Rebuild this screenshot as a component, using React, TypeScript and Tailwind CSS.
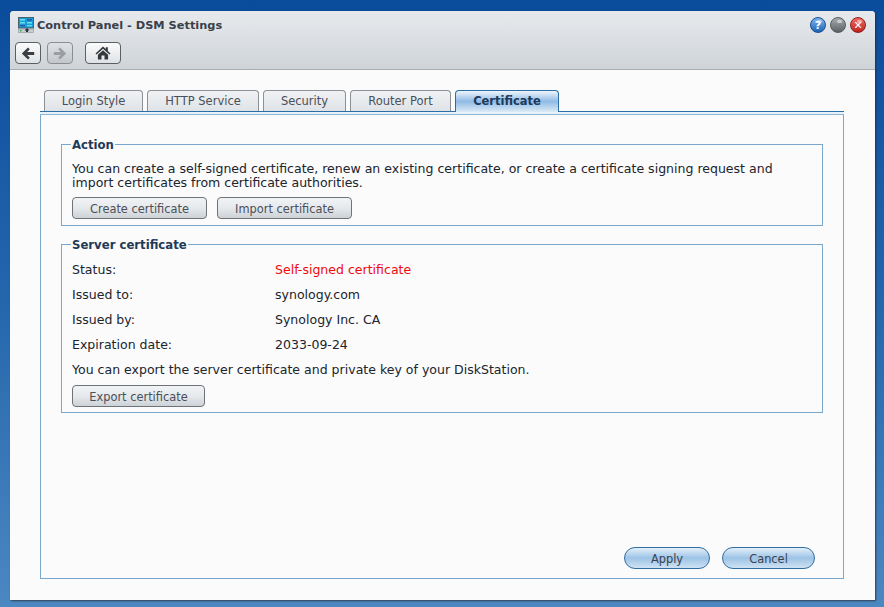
import React from "react";

const font = "font-['DejaVu_Sans',Verdana,sans-serif]";

const tabs = [
  { label: "Login Style", w: "w-[99px]" },
  { label: "HTTP Service", w: "w-[112px]" },
  { label: "Security", w: "w-[83px]" },
  { label: "Router Port", w: "w-[101px]" },
];

const details = [
  { k: "Status:", v: "Self-signed certificate", c: "text-[#f00a0a]" },
  { k: "Issued to:", v: "synology.com", c: "text-[#20242c]" },
  { k: "Issued by:", v: "Synology Inc. CA", c: "text-[#20242c]" },
  { k: "Expiration date:", v: "2033-09-24", c: "text-[#20242c]" },
];

const GrayButton = ({ label, w }: { label: string; w: string }) => (
  <button className={`${w} h-[22px] pt-[3px] rounded-[4px] border border-[#6e7378] bg-gradient-to-b from-[#f1f3f5] via-[#e6e9ec] to-[#cdd2d7] text-[11.4px] text-[#4a4f58] flex items-center justify-center`}>
    {label}
  </button>
);

const BlueButton = ({ label, w }: { label: string; w: string }) => (
  <button className={`${w} h-[22px] pt-[3px] rounded-full border border-[#2f6c9f] bg-gradient-to-b from-[#e4eff8] via-[#9cc3e6] to-[#cfe2f2] text-[11.4px] text-[#3b4250] flex items-center justify-center`}>
    {label}
  </button>
);

const NavButton = ({ children, w, off }: { children: React.ReactNode; w: string; off?: boolean }) => (
  <div className={`${w} h-[22px] rounded-[4px] border ${off ? "border-[#8a8f94] from-[#dfe2e5] to-[#c3c7cb]" : "border-[#5a5f64] from-[#fbfcfc] to-[#dfe2e5]"} bg-gradient-to-b flex items-center justify-center`}>
    {children}
  </div>
);

const Arrow = ({ color, flip }: { color: string; flip?: boolean }) => (
  <svg width="14" height="13" viewBox="0 0 14 13" className={flip ? "-scale-x-100" : ""}>
    <path d="M7 0.5 L0.8 6.5 L7 12.5 L8.8 10.7 L6.2 8.1 H13.2 V4.9 H6.2 L8.8 2.3 Z" fill={color} />
  </svg>
);

const Home = () => (
  <svg width="16" height="14" viewBox="0 0 16 14">
    <path d="M8 0.5 L0.5 7.4 L1.6 8.5 L8 2.8 L14.4 8.5 L15.5 7.4 L12.8 4.9 V1.2 H10.8 V3.1 Z" fill="#33383d" />
    <path d="M8 4.2 L2.9 8.7 V13.5 H6.5 V9.6 H9.5 V13.5 H13.1 V8.7 Z" fill="#33383d" />
  </svg>
);

const PanelIcon = () => (
  <svg width="16" height="16" viewBox="0 0 16 16">
    <rect x="0.5" y="0.5" width="15" height="10.5" fill="#1c9bd8" stroke="#47606e" />
    <rect x="2" y="2" width="5" height="1.6" fill="#60e0e8" />
    <rect x="2" y="5" width="5" height="1.6" fill="#60e0e8" />
    <rect x="2" y="8" width="5" height="1.4" fill="#1f5fa8" />
    <rect x="9" y="2" width="5" height="1.6" fill="#1f5fa8" />
    <rect x="9" y="5" width="5" height="1.6" fill="#60e0e8" />
    <rect x="9" y="8" width="5" height="1.4" fill="#60e0e8" />
    <rect x="0.5" y="12" width="15" height="3.5" fill="#c9ced2" stroke="#8b9298" strokeWidth="0.6" />
    <rect x="2" y="13" width="1.5" height="1.5" fill="#2fae4f" />
    <path d="M9 11 L6.5 13.5 H8 V15 H10 V13.5 H11.5 Z" fill="#2b3036" />
  </svg>
);

const Orb = ({ from, to, edge, children }: { from: string; to: string; edge: string; children?: React.ReactNode }) => (
  <div className={`relative w-[16px] h-[16px] rounded-full border ${edge} bg-gradient-to-b ${from} ${to} flex items-center justify-center text-white text-[11px] font-bold leading-none`}>
    <span className="absolute left-[6px] top-[2px] w-[5px] h-[3px] rounded-full bg-white/50" />
    <span className="relative">{children}</span>
  </div>
);

export default function App() {
  return (
    <div className={`w-[884px] h-[607px] overflow-hidden bg-gradient-to-b from-[#0a4c9c] via-[#2467ad] to-[#4b88c2] pl-[10px] pr-[9px] pt-[11px] ${font}`}>
      <div className="w-[865px] h-[589px] flex flex-col bg-[#fbfbfc] rounded-t-[4px] shadow-[1px_1px_2px_rgba(40,40,40,0.75)]">
        {/* title bar */}
        <div className="h-[59px] shrink-0 rounded-t-[4px] border-b border-[#a9adb1] bg-gradient-to-b from-[#e7eaed] to-[#cfd4d8] px-[5px] pt-[6px]">
          <div className="flex items-center h-[16px] pl-[3px] pr-[4px]">
            <PanelIcon />
            <span className="ml-[3px] text-[11.35px] font-bold text-[#39404a]">Control Panel - DSM Settings</span>
            <div className="ml-auto flex gap-[4px]">
              <Orb from="from-[#7fb6ea]" to="to-[#1c63b8]" edge="border-[#1b4f8f]">?</Orb>
              <Orb from="from-[#a8acaf]" to="to-[#5d6266]" edge="border-[#55595c]" />
              <Orb from="from-[#ee6a62]" to="to-[#c0201c]" edge="border-[#8f1f1c]">✕</Orb>
            </div>
          </div>
          <div className="flex mt-[9px]">
            <NavButton w="w-[26px]"><Arrow color="#3a3f44" /></NavButton>
            <div className="w-[6px]" />
            <NavButton w="w-[26px]" off><Arrow color="#9a9ea2" flip /></NavButton>
            <div className="w-[12px]" />
            <NavButton w="w-[36px]"><Home /></NavButton>
          </div>
        </div>

        {/* content */}
        <div className="flex-1 flex flex-col pl-[30px] pr-[31px] pt-[20px] pb-[21px]">
          <div className="flex items-start h-[21px] pl-[4px] gap-[4px]">
            {tabs.map((t) => (
              <div key={t.label} className={`${t.w} h-[21px] pt-[1px] rounded-t-[4px] border border-b-0 border-[#8d9195] bg-gradient-to-b from-[#f0f2f4] to-[#dfe3e7] text-[11.5px] text-[#4a4f5a] flex items-center justify-center`}>
                {t.label}
              </div>
            ))}
            <div className="relative z-10 w-[104px] h-[22px] rounded-t-[4px] border border-b-0 border-[#2b6ea6] bg-gradient-to-b from-[#eef5fb] via-[#8fbbe4] to-[#dceaf6] text-[11.5px] font-bold text-[#1d3a5c] flex items-center justify-center">
              Certificate
            </div>
          </div>

          <div className="flex-1 flex flex-col border border-t-0 border-[#7ba7cc]">
            <div className="h-[4px] shrink-0 -mx-px border-t border-t-[#2b6ea6] border-b border-b-[#8fb5d6] bg-[#e9f2f9]" />
            <div className="flex-1 flex flex-col px-[20px] pt-[21px]">
              <fieldset className="h-[90px] border border-[#7ba7cc] px-[10px]">
                <legend className="h-[16px] pt-[2px] px-[1px] -ml-[1px] text-[11.7px] font-bold text-[#1f3a58] leading-[14px]">Action</legend>
                <p className="mt-[10px] text-[12.54px] leading-[14px] text-[#20242c]">
                  You can create a self-signed certificate, renew an existing certificate, or create a certificate signing request and import certificates from certificate authorities.
                </p>
                <div className="flex gap-[10px] mt-[7px]">
                  <GrayButton label="Create certificate" w="w-[135px]" />
                  <GrayButton label="Import certificate" w="w-[135px]" />
                </div>
              </fieldset>

              <fieldset className="mt-[10px] h-[177px] border border-[#7ba7cc] px-[10px]">
                <legend className="h-[16px] pt-[2px] px-[1px] -ml-[1px] text-[11.7px] font-bold text-[#1f3a58] leading-[14px]">Server certificate</legend>
                <div className="mt-[11px] flex flex-col gap-[11px]">
                  {details.map((d) => (
                    <div key={d.k} className="flex h-[14px] items-center text-[12.54px]">
                      <span className="w-[203px] text-[#20242c]">{d.k}</span>
                      <span className={d.c}>{d.v}</span>
                    </div>
                  ))}
                  <p className="h-[14px] leading-[14px] text-[12.54px] text-[#20242c]">You can export the server certificate and private key of your DiskStation.</p>
                </div>
                <div className="mt-[8px]">
                  <GrayButton label="Export certificate" w="w-[133px]" />
                </div>
              </fieldset>

              <div className="mt-auto mb-[9px] flex justify-end gap-[12px] pr-[8px]">
                <BlueButton label="Apply" w="w-[86px]" />
                <BlueButton label="Cancel" w="w-[93px]" />
              </div>
            </div>
          </div>
        </div>
      </div>
    </div>
  );
}
